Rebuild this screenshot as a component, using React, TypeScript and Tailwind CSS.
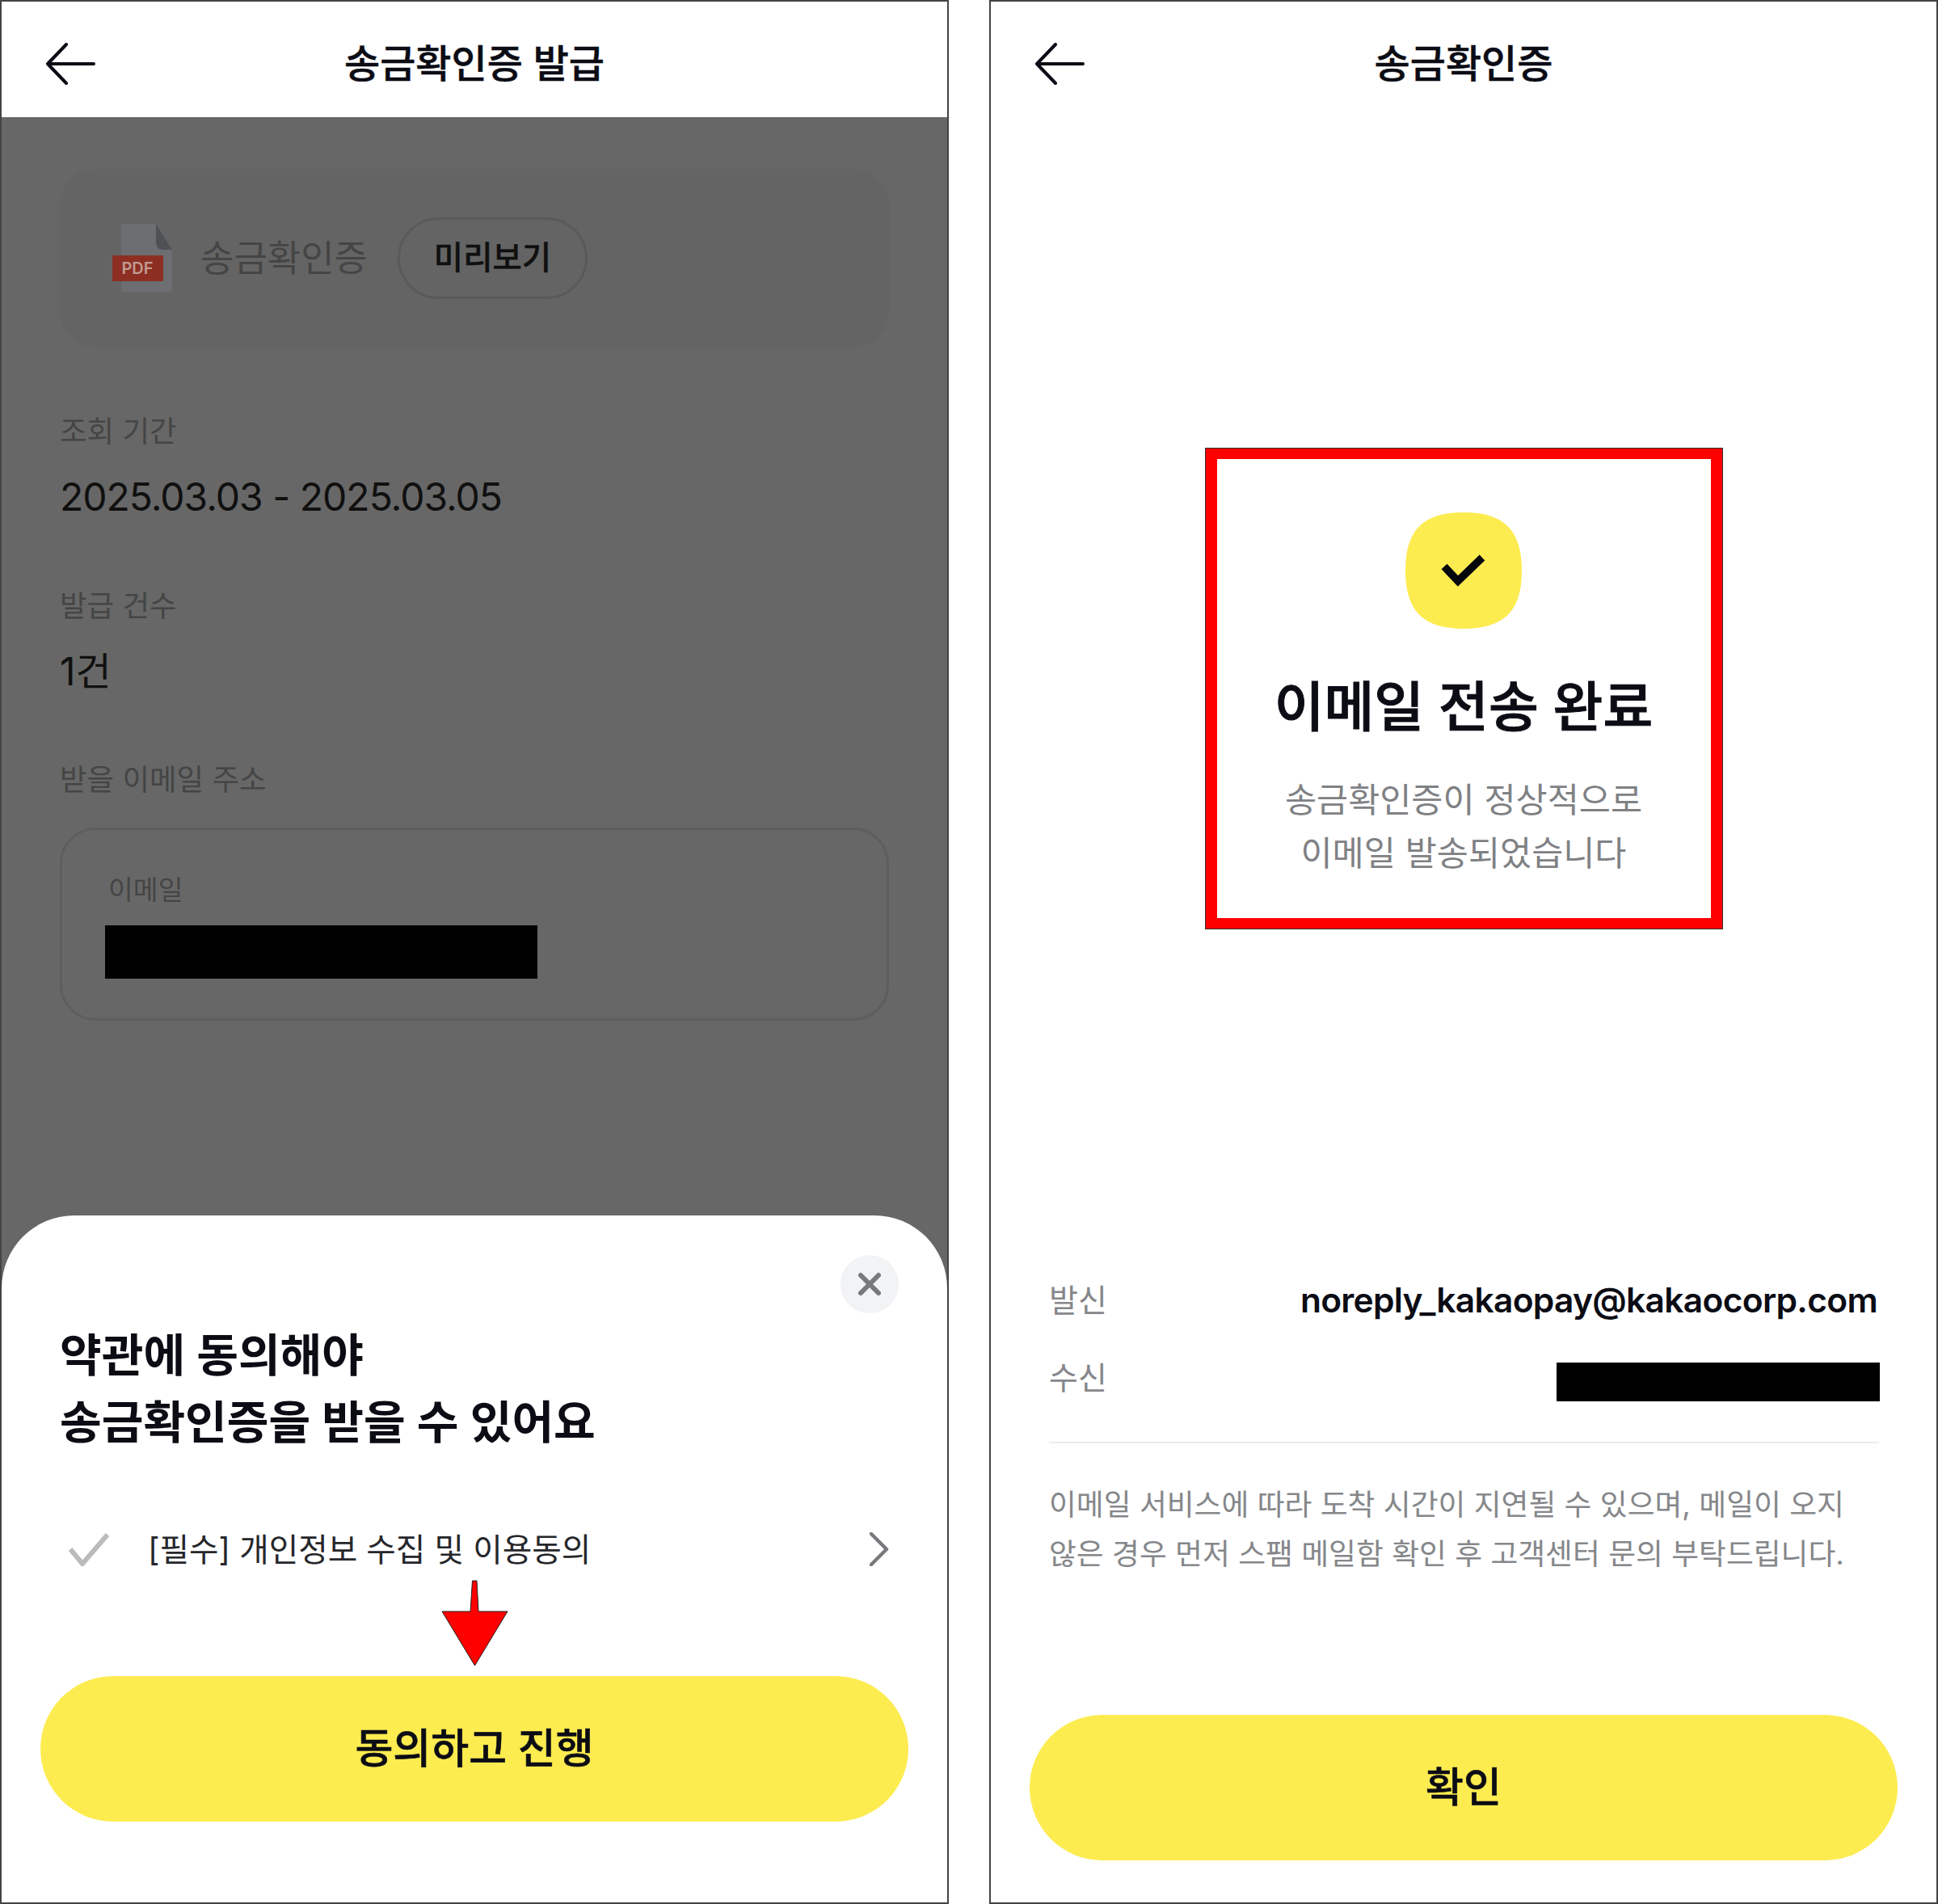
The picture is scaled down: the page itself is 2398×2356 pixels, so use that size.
const KR = 'font-["Inter","Noto_Sans_CJK_KR",sans-serif]';

function BackArrow() {
  return (
    <svg width="62" height="52" viewBox="0 0 62 52" fill="none" className="block">
      <path d="M26 2 L3 26 L26 50 M3 26 H60" stroke="#0b0c14" strokeWidth="4" strokeLinecap="round" strokeLinejoin="round" />
    </svg>
  );
}

function Header({ title }: { title: string }) {
  return (
    <div className="grid h-[143px] shrink-0 grid-cols-[1fr_auto_1fr] items-center bg-white pt-[10px]">
      <div className="ml-[54px]">
        <BackArrow />
      </div>
      <div className="text-[48px] leading-[60px] font-medium text-[#0b0c14] [-webkit-text-stroke:0.5px_#0b0c14]">{title}</div>
      <div />
    </div>
  );
}

function PdfIcon() {
  return (
    <svg width="75" height="86" viewBox="0 0 75 86" className="block shrink-0">
      <path d="M15 0 H54 L74 32 V82 Q74 84 71 84 H15 Q11 84 11 80 V4 Q11 0 15 0 Z" fill="#6c6e71" />
      <path d="M54 0 L74 32 H62 Q54 32 54 22 Z" fill="#4f5255" />
      <rect x="0" y="39" width="63" height="32" rx="1" fill="#8c2f22" />
      <text x="31" y="62" textAnchor="middle" fontSize="20" fontWeight="600" fill="#c29a92" fontFamily="Inter, sans-serif">PDF</text>
    </svg>
  );
}

function Squircle() {
  return (
    <svg width="144" height="144" viewBox="0 0 144 144" className="block">
      <path d="M72 0 C122 0 144 22 144 72 C144 122 122 144 72 144 C22 144 0 122 0 72 C0 22 22 0 72 0 Z" fill="#fdec50" />
      <path d="M48 67 L65 85 L95 56" fill="none" stroke="#05060c" strokeWidth="9.5" />
    </svg>
  );
}

export default function App() {
  return (
    <div className={`${KR} flex h-[2356px] w-[2398px] gap-[50px] bg-white`}>
      {/* Left phone */}
      <div className="flex h-full w-[1174px] flex-col border-2 border-[#444444]">
        <Header title="송금확인증 발급" />
        <div className="flex flex-1 flex-col bg-[#676767]">
          <div className="px-[72px]">
            <div className="mt-[64px] flex h-[221px] items-center rounded-[44px] bg-[#646464] pl-[65px]">
              <PdfIcon />
              <span className="ml-[34px] text-[45px] leading-[60px] text-[#454545]">송금확인증</span>
              <div className="ml-[37px] flex h-[101px] w-[235px] items-center justify-center rounded-full border-[3px] border-[#5a5a5a] text-[39.5px] font-medium text-[#101010] [-webkit-text-stroke:0.4px_#101010]">
                미리보기
              </div>
            </div>
            <div className="mt-[79px] text-[36.5px] leading-[50px] text-[#454545]">조회 기간</div>
            <div className="mt-[26px] text-[48px] leading-[60px] tracking-[-1px] text-[#101010]">2025.03.03 - 2025.03.05</div>
            <div className="mt-[80px] text-[36.5px] leading-[50px] text-[#454545]">발급 건수</div>
            <div className="mt-[26px] text-[48px] leading-[60px] text-[#101010]">1건</div>
            <div className="mt-[79px] text-[36.5px] leading-[50px] text-[#454545]">받을 이메일 주소</div>
            <div className="mt-[34px] h-[239px] rounded-[44px] border-[3px] border-[#5e5e5e] pl-[53px] pt-[52px]">
              <div className="ml-[4px] text-[33.5px] leading-[44px] text-[#454545]">이메일</div>
              <div className="mt-[22px] h-[66px] w-[535px] bg-black" />
            </div>
          </div>
          <div className="relative mt-[241px] flex flex-1 flex-col rounded-t-[90px] bg-white pt-[49px]">
            <div className="flex justify-end pr-[60px]">
              <div className="flex h-[72px] w-[72px] items-center justify-center rounded-full bg-[#f2f3f5]">
                <svg width="30" height="30" viewBox="0 0 30 30">
                  <path d="M4 4 L26 26 M26 4 L4 26" stroke="#77797c" strokeWidth="6" strokeLinecap="round" />
                </svg>
              </div>
            </div>
            <div className="mt-[11px] pl-[72px] text-[56.2px] leading-[83px] font-semibold text-[#0b0c14]">
              약관에 동의해야
              <br />
              송금확인증을 받을 수 있어요
            </div>
            <div className="mt-[85px] flex h-[60px] items-center pl-[83px] pr-[72px]">
              <svg width="50" height="42" viewBox="0 0 50 42" className="shrink-0">
                <path d="M2 21 L17 39 L48 3" fill="none" stroke="#bbbbbb" strokeWidth="6" />
              </svg>
              <span className="ml-[48px] mt-[2px] text-[39.7px] leading-[60px] text-[#26272b]">[필수] 개인정보 수집 및 이용동의</span>
              <svg width="24" height="42" viewBox="0 0 24 42" className="ml-auto shrink-0">
                <path d="M2 2 L21 21 L2 40" fill="none" stroke="#77797c" strokeWidth="4.5" strokeLinecap="round" strokeLinejoin="round" />
              </svg>
            </div>
            <div className="mx-[48px] mt-[127px] flex h-[180px] items-center justify-center rounded-full bg-[#fdec50] text-[51px] font-medium text-[#0b0c14] [-webkit-text-stroke:0.6px_#0b0c14]">
              동의하고 진행
            </div>
            <svg width="83" height="108" viewBox="0 0 83 108" className="absolute left-[544px] top-[451px]">
              <path d="M38.5 1 L44 1 L46 39 L82 39 L41.5 106 L1 39 L36 39 Z" fill="#ff0000" stroke="#222222" strokeWidth="1" />
            </svg>
          </div>
        </div>
      </div>

      {/* Right phone */}
      <div className="flex h-full w-[1174px] flex-col border-2 border-[#444444]">
        <Header title="송금확인증" />
        <div className="mt-[409px] flex h-[596px] w-[641px] flex-col items-center self-center border-x-[15px] border-y-[14px] border-[#ff0000] pt-[66px] outline outline-1 -outline-offset-1 outline-[#333333]">
          <Squircle />
          <div className="mt-[52px] text-[67.2px] leading-[90px] font-medium text-[#0b0c14] [-webkit-text-stroke:1px_#0b0c14]">이메일 전송 완료</div>
          <div className="mt-[37px] text-center text-[42.5px] leading-[66px] text-[#7f8184]">
            송금확인증이 정상적으로
            <br />
            이메일 발송되었습니다
          </div>
        </div>
        <div className="mt-[429px] pl-[72px] pr-[73px]">
          <div className="flex h-[60px] items-center justify-between">
            <span className="text-[39px] text-[#85878a]">발신</span>
            <span className="text-[42.5px] font-semibold tracking-[-0.7px] text-[#0b0c14]">noreply_kakaopay@kakaocorp.com</span>
          </div>
          <div className="mt-[36px] flex h-[60px] items-center justify-between">
            <span className="text-[39px] text-[#85878a]">수신</span>
            <div className="-mr-[3px] mt-[11px] h-[48px] w-[400px] self-start bg-black" />
          </div>
          <div className="-mr-[2px] mt-[49px] h-[2px] bg-[#ececec]" />
          <div className="mt-[45px] whitespace-nowrap text-[36.8px] leading-[61px] text-[#85878a]">
            이메일 서비스에 따라 도착 시간이 지연될 수 있으며, 메일이 오지
            <br />
            않은 경우 먼저 스팸 메일함 확인 후 고객센터 문의 부탁드립니다.
          </div>
        </div>
        <div className="mx-[48px] mb-[52px] mt-auto flex h-[180px] items-center justify-center rounded-full bg-[#fdec50] text-[51px] font-medium text-[#0b0c14] [-webkit-text-stroke:0.6px_#0b0c14]">
          확인
        </div>
      </div>
    </div>
  );
}
